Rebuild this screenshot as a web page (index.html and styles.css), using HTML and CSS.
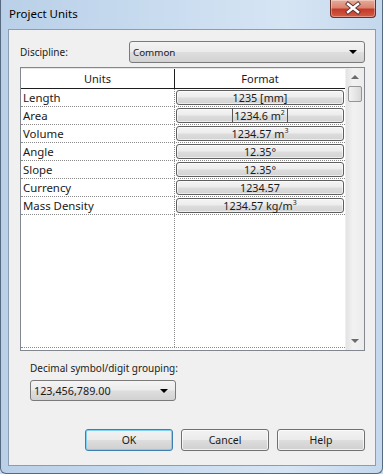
FILE: index.html
```html
<!DOCTYPE html>
<html>
<head>
<meta charset="utf-8">
<title>Project Units</title>
<link rel="stylesheet" href="styles.css">
</head>
<body>
<div class="window">
  <div class="titlebar">
    <span class="title">Project Units</span>
    <div class="close">
      <svg width="46" height="18" viewBox="0 0 46 18">
        <path d="M18 5 L28 13 M28 5 L18 13" stroke="#5a3030" stroke-width="4.2" stroke-linecap="square" fill="none"/>
        <path d="M18 5 L28 13 M28 5 L18 13" stroke="#ffffff" stroke-width="2.4" stroke-linecap="square" fill="none"/>
      </svg>
    </div>
  </div>
  <div class="content">
    <div class="field-row">
      <span class="label">Discipline:</span>
      <div class="combo wide"><span>Common</span><span class="arrow"></span></div>
    </div>
    <div class="table">
      <div class="list">
        <div class="head">
          <div class="hcell units">Units</div>
          <div class="hcell">Format</div>
        </div>
        <div class="row"><div class="name">Length</div><div class="fmt"><div class="fbtn">1235 [mm]</div></div></div>
        <div class="row"><div class="name">Area</div><div class="fmt"><div class="fbtn"><span class="caret">1234.6 m<sup>2</sup></span></div></div></div>
        <div class="row"><div class="name">Volume</div><div class="fmt"><div class="fbtn">1234.57 m<sup>3</sup></div></div></div>
        <div class="row"><div class="name">Angle</div><div class="fmt"><div class="fbtn">12.35°</div></div></div>
        <div class="row"><div class="name">Slope</div><div class="fmt"><div class="fbtn">12.35°</div></div></div>
        <div class="row"><div class="name">Currency</div><div class="fmt"><div class="fbtn">1234.57</div></div></div>
        <div class="row"><div class="name">Mass Density</div><div class="fmt"><div class="fbtn">1234.57 kg/m<sup>3</sup></div></div></div>
        <div class="row filler"><div class="name"></div><div class="fmt"></div></div>
      </div>
      <div class="scrollbar">
        <div class="sarrow"><span class="tri up"></span></div>
        <div class="track"><div class="thumb"></div></div>
        <div class="sarrow"><span class="tri down"></span></div>
      </div>
    </div>
    <div class="decimal">
      <span class="label">Decimal symbol/digit grouping:</span>
      <div class="combo small"><span>123,456,789.00</span><span class="arrow"></span></div>
    </div>
    <div class="buttons">
      <div class="btn default">OK</div>
      <div class="btn">Cancel</div>
      <div class="btn">Help</div>
    </div>
  </div>
</div>
</body>
</html>
```
FILE: styles.css
```css
* { box-sizing: border-box; }
html, body { margin: 0; padding: 0; }
body {
  width: 383px;
  height: 474px;
  overflow: hidden;
  font-family: "Noto Sans", "Open Sans", sans-serif;
  font-size: 11px;
  color: #1a1a1a;
  background: #c9dbee;
}
.window {
  width: 383px;
  height: 474px;
  display: flex;
  flex-direction: column;
  padding: 0 6px 7px 7px;
  border-left: 1px solid #56697f;
  border-right: 1px solid #56697f;
  border-bottom: 1px solid #56697f;
  border-radius: 0 0 6px 6px;
  background: linear-gradient(90deg, #b9d0e8 0%, #c8dbef 40%, #d6e5f4 75%, #c4d8ed 100%);
}
.titlebar {
  height: 29px;
  flex: none;
  display: flex;
  justify-content: space-between;
  align-items: flex-start;
}
.title {
  margin-top: 6px;
  margin-left: 1px;
  font-size: 11.5px;
  color: #000;
}
.close {
  width: 46px;
  height: 18px;
  border: 1px solid #6a2e28;
  border-top: none;
  border-radius: 0 0 4px 4px;
  background: linear-gradient(180deg, #e6ab99 0%, #d98570 45%, #c33a28 55%, #d25e46 100%);
  box-shadow: inset 0 0 0 1px rgba(255,255,255,0.35);
}
.close svg { display: block; margin-top: -1px; margin-left: -1px; }
.content {
  flex: 1;
  display: flex;
  flex-direction: column;
  background: #f0f0f0;
  border: 1px solid #8c9cb2;
  padding: 11px 10px 14px 11px;
}
.field-row {
  display: flex;
  align-items: center;
  height: 22px;
}
.label { font-size: 10px; }
.combo {
  display: flex;
  align-items: center;
  justify-content: space-between;
  border: 1px solid #7a7a7a;
  border-radius: 3px;
  background: linear-gradient(180deg, #f4f4f4 0%, #ebebeb 48%, #dedede 52%, #d2d2d2 100%);
  padding: 0 7px 0 3px;
}
.combo.wide { margin-left: auto; width: 236px; height: 22px; font-size: 9.8px; }
.combo.small { width: 146px; height: 21px; margin-left: 10px; margin-top: 5px; font-size: 10.8px; }
.arrow {
  width: 0; height: 0;
  border-left: 4px solid transparent;
  border-right: 4px solid transparent;
  border-top: 4px solid #000;
}
.table {
  margin-top: 4px;
  width: 345px;
  height: 284px;
  display: flex;
  border: 1px solid #828790;
  background: #fff;
}
.list {
  flex: 1;
  display: flex;
  flex-direction: column;
  padding-bottom: 2px;
}
.head {
  display: grid;
  grid-template-columns: 154px 1fr;
  height: 21px;
  border-bottom: 1px solid #1e1e1e;
  border-top: 1px solid #e6e6e6;
}
.hcell {
  display: flex;
  align-items: center;
  justify-content: center;
  font-size: 11px;
}
.hcell.units { border-right: 1px solid #1e1e1e; }
.row {
  display: grid;
  grid-template-columns: 154px 1fr;
  height: 18px;
  border-bottom: 1px dotted #8a8a8a;
}
.name {
  padding-left: 2px;
  line-height: 17px;
  border-right: 1px dotted #8a8a8a;
  font-size: 11.4px;
}
.fmt {
  padding: 1px;
}
.fbtn {
  height: 15px;
  border: 1px solid #5f5f5f;
  border-radius: 3px;
  background: linear-gradient(180deg, #f5f5f5 0%, #ececec 48%, #dddddd 52%, #d3d3d3 100%);
  text-align: center;
  font-size: 10.8px;
  line-height: 13px;
  box-shadow: inset 0 0 0 1px rgba(255,255,255,0.6);
}
.fbtn sup { font-size: 7px; line-height: 0; vertical-align: 5px; }
.caret { border-left: 1px solid #555; border-right: 1px solid #555; padding: 0 2px 0 1px; }
.row.filler { flex: 1; height: auto; }
.scrollbar {
  width: 19px;
  display: flex;
  flex-direction: column;
  background: linear-gradient(90deg, #e3e3e3, #f2f2f2 40%, #ececec);
  border-left: 1px solid #f0f0f0;
}
.sarrow {
  height: 18px;
  display: flex;
  align-items: center;
  justify-content: center;
}
.tri { width: 0; height: 0; border-left: 4px solid transparent; border-right: 4px solid transparent; }
.tri.up { border-bottom: 4px solid #6b6b6b; }
.tri.down { border-top: 4px solid #6b6b6b; }
.track { flex: 1; padding: 0 2px; }
.thumb {
  height: 16px;
  border: 1px solid #959595;
  border-radius: 2px;
  background: linear-gradient(90deg, #f3f3f3, #e6e6e6 50%, #d8d8d8);
}
.decimal {
  margin-top: 10px;
  display: flex;
  flex-direction: column;
}
.decimal .label { margin-left: 10px; }
.buttons {
  margin-top: auto;
  display: flex;
  justify-content: flex-end;
  gap: 8px;
}
.btn {
  width: 88px;
  height: 22px;
  display: flex;
  align-items: center;
  justify-content: center;
  border: 1px solid #707070;
  border-radius: 3px;
  background: linear-gradient(180deg, #f2f2f2 0%, #ebebeb 48%, #dddddd 52%, #cfcfcf 100%);
  font-size: 10.5px;
  box-shadow: inset 0 0 0 1px rgba(255,255,255,0.7);
}
.btn.default {
  border-color: #3c7fb1;
  box-shadow: inset 0 0 0 1px #7fd0f2;
}
```
